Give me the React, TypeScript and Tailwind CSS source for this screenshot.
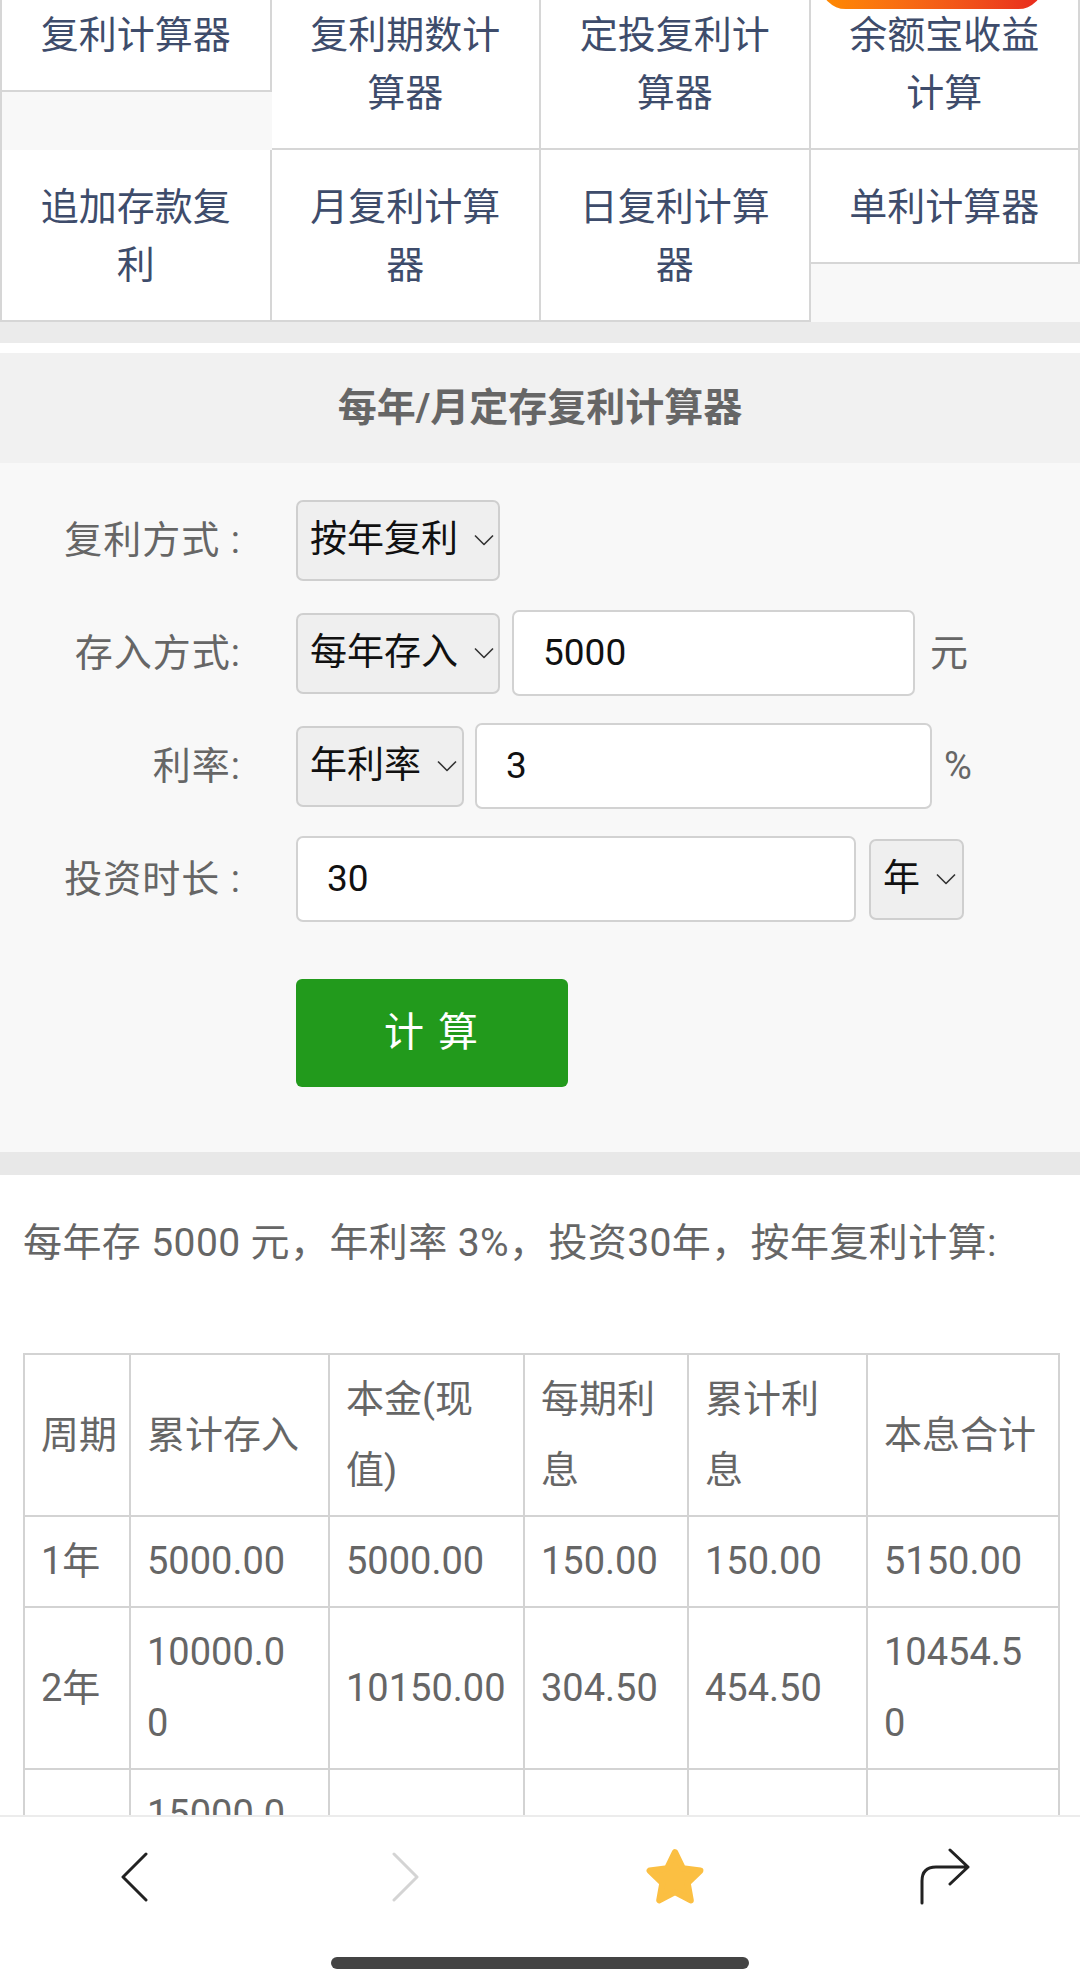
import type { ReactNode } from 'react'

const tabs = [
  '复利计算器',
  '复利期数计算器',
  '定投复利计算器',
  '余额宝收益计算',
  '追加存款复利',
  '月复利计算器',
  '日复利计算器',
  '单利计算器',
]

// column widths of the result table
const cols = ['w-[106px]', 'w-[199px]', 'w-[195px]', 'w-[164px]', 'w-[179px]', 'w-[192px]']

const header: string[][] = [
  ['周期'],
  ['累计存入'],
  ['本金(现', '值)'],
  ['每期利', '息'],
  ['累计利', '息'],
  ['本息合计'],
]

const rows: string[][][] = [
  [['1年'], ['5000.00'], ['5000.00'], ['150.00'], ['150.00'], ['5150.00']],
  [['2年'], ['10000.0', '0'], ['10150.00'], ['304.50'], ['454.50'], ['10454.5', '0']],
  [['3年'], ['15000.0', '0'], ['15454.50'], ['463.64'], ['918.14'], ['15918.14']],
]

function Chevron() {
  return (
    <svg width="20" height="12" viewBox="0 0 20 12" fill="none" className="shrink-0">
      <path d="M1 1.5 L10 10.5 L19 1.5" stroke="#333" strokeWidth="1.6" strokeLinejoin="round" />
    </svg>
  )
}

function Select({ label, className }: { label: string; className: string }) {
  return (
    <div
      className={`flex h-[81px] shrink-0 items-center gap-[16px] rounded-[7px] border-2 border-[#cfcfcf] bg-[#efefef] pl-[12px] text-[37px] text-[#111] ${className}`}
    >
      <span>{label}</span>
      <Chevron />
    </div>
  )
}

function Input({ value, className }: { value: string; className: string }) {
  return (
    <div
      className={`flex h-[86px] shrink-0 items-center rounded-[7px] border-2 border-[#d2d2d2] bg-white pl-[29px] text-[37px] text-[#111] ${className}`}
    >
      {value}
    </div>
  )
}

function FormRow({ label, children }: { label: string; children: ReactNode }) {
  return (
    <div className="flex h-[86px] items-center">
      <div className="w-[241px] shrink-0 whitespace-pre text-right text-[38px] tracking-[1px] text-[#666]">{label}</div>
      <div className="ml-[55px] flex items-center">{children}</div>
    </div>
  )
}

function Cell({ lines, head }: { lines: string[]; head?: boolean }) {
  const Tag = head ? 'th' : 'td'
  return (
    <Tag className="border-2 border-[#d3d3d3] py-[9px] pl-[16px] text-left align-middle text-[38px] font-normal leading-[71px] whitespace-nowrap text-[#666]">
      {lines.map((l, i) => (
        <div key={i}>{l}</div>
      ))}
    </Tag>
  )
}

export default function App() {
  return (
    <div className="flex h-[1984px] w-[1080px] flex-col overflow-hidden bg-white font-['Roboto','Noto_Sans_CJK_SC',sans-serif]">
      <div className="relative flex-1 overflow-hidden">
        {/* floating badge cut at the top */}
        <div className="absolute right-[37px] top-[-40px] z-10 h-[49px] w-[222px] rounded-full bg-gradient-to-r from-[#ff8a00] to-[#e8281e]" />

        {/* calculator tabs */}
        <div className="h-[322px] overflow-hidden border-l-2 border-[#d6d6d6] bg-[#f8f8f8]">
          <div className="-mt-[22px] flex flex-wrap items-start">
            {tabs.map((t) => (
              <div
                key={t}
                className="w-1/4 border-b-2 border-r-2 border-[#d6d6d6] bg-white px-[29px] pb-[26px] pt-[28px] text-center text-[38px] leading-[58px] text-[#3e4c6b]"
              >
                {t}
              </div>
            ))}
          </div>
        </div>

        <div className="h-[21px] bg-[#ebebeb]" />
        <div className="h-[10px] bg-white" />

        <div className="flex h-[110px] items-center justify-center bg-[#f1f1f1] text-[39px] font-bold text-[#666]">
          每年/月定存复利计算器
        </div>

        {/* form */}
        <div className="flex flex-col gap-[27px] bg-[#f8f8f8] pb-[65px] pt-[34px]">
          <FormRow label="复利方式 :">
            <Select label="按年复利" className="w-[204px]" />
          </FormRow>
          <FormRow label="存入方式:">
            <Select label="每年存入" className="w-[204px]" />
            <Input value="5000" className="ml-[12px] w-[403px]" />
            <span className="ml-[15px] text-[38px] text-[#666]">元</span>
          </FormRow>
          <FormRow label="利率:">
            <Select label="年利率" className="w-[168px]" />
            <Input value="3" className="ml-[11px] w-[457px]" />
            <span className="ml-[12px] text-[38px] text-[#666]">%</span>
          </FormRow>
          <FormRow label="投资时长 :">
            <Input value="30" className="w-[560px]" />
            <Select label="年" className="ml-[13px] w-[95px] gap-[10px] pl-[12px]" />
          </FormRow>
          <div className="ml-[296px] mt-[30px] flex h-[108px] w-[272px] items-center justify-center rounded-[6px] bg-[#229a1c] text-[40px] tracking-[2px] text-white">
            计 算
          </div>
        </div>
        <div className="h-[23px] bg-[#e8e8e8]" />

        <p className="mt-[40px] px-[23px] text-[39px] leading-[57px] tracking-[0.4px] text-[#666]">
          每年存 5000 元，年利率 3%，投资30年，按年复利计算:
        </p>

        <table className="ml-[23px] mt-[81px] table-fixed border-collapse">
          <colgroup>
            {cols.map((c) => (
              <col key={c} className={c} />
            ))}
          </colgroup>
          <thead>
            <tr>
              {header.map((h, i) => (
                <Cell key={i} lines={h} head />
              ))}
            </tr>
          </thead>
          <tbody>
            {rows.map((r, i) => (
              <tr key={i}>
                {r.map((c, j) => (
                  <Cell key={j} lines={c} />
                ))}
              </tr>
            ))}
          </tbody>
        </table>
      </div>

      {/* browser toolbar */}
      <div className="h-[169px] shrink-0 border-t-2 border-[#ececec] bg-white">
        <div className="mt-[30px] grid h-[60px] grid-cols-4">
          <div className="flex items-center justify-center">
            <svg width="32" height="50" viewBox="0 0 32 50" fill="none">
              <path d="M27 2 L4 25 L27 48" stroke="#222" strokeWidth="3" strokeLinecap="round" strokeLinejoin="round" />
            </svg>
          </div>
          <div className="flex items-center justify-center">
            <svg width="32" height="50" viewBox="0 0 32 50" fill="none">
              <path d="M5 2 L28 25 L5 48" stroke="#d4d4d4" strokeWidth="3" strokeLinecap="round" strokeLinejoin="round" />
            </svg>
          </div>
          <div className="flex items-center justify-center">
            <svg width="62" height="58" viewBox="0 0 60 56">
              <path
                d="M30 4 L37.6 19.6 L54.5 21.9 L42.2 33.8 L45.2 50.6 L30 42.6 L14.8 50.6 L17.8 33.8 L5.5 21.9 L22.4 19.6 Z"
                fill="#fbbf42"
                stroke="#fbbf42"
                strokeWidth="6"
                strokeLinejoin="round"
              />
            </svg>
          </div>
          <div className="flex items-center justify-center">
            <svg width="56" height="58" viewBox="0 0 56 58" fill="none">
              <path
                d="M5 55 V33 Q5 19 19 19 H51 M33 2 L51 19 L33 36"
                stroke="#222"
                strokeWidth="3"
                strokeLinecap="round"
                strokeLinejoin="round"
              />
            </svg>
          </div>
        </div>
        <div className="mt-[50px] flex justify-center">
          <div className="h-[12px] w-[418px] rounded-full bg-[#444]" />
        </div>
      </div>
    </div>
  )
}
